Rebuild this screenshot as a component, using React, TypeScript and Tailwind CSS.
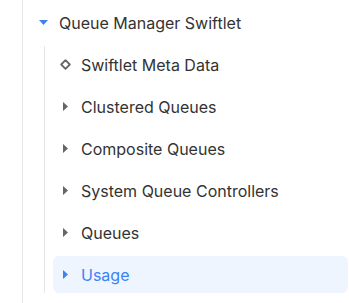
import React from "react";

const CaretDown = () => (
  <svg width="9" height="5" viewBox="0 0 9 5" className="text-[#3b82f6]">
    <polygon points="0,0 9,0 4.5,5" fill="currentColor" />
  </svg>
);

const CaretRight = ({ className = "" }: { className?: string }) => (
  <svg width="5" height="9" viewBox="0 0 5 9" className={className}>
    <polygon points="0,0 5,4.5 0,9" fill="currentColor" />
  </svg>
);

const Diamond = () => (
  <svg width="11" height="11" viewBox="0 0 11 11" className="text-[#666]">
    <polygon
      points="5.5,1.2 9.8,5.5 5.5,9.8 1.2,5.5"
      fill="none"
      stroke="currentColor"
      strokeWidth="1.8"
      strokeLinejoin="round"
    />
  </svg>
);

const items = [
  { label: "Swiftlet Meta Data", leaf: true },
  { label: "Clustered Queues" },
  { label: "Composite Queues" },
  { label: "System Queue Controllers" },
  { label: "Queues" },
  { label: "Usage", selected: true },
];

export default function App() {
  return (
    <div
      className="w-[349px] h-[303px] bg-white pl-[22px] overflow-hidden"
      style={{ fontFamily: "Inter, 'Noto Sans', sans-serif" }}
    >
      <div className="h-full border-l border-[#e6e6e6] pt-[4px] pl-[8px]">
        <div className="h-[37px] flex items-center text-[16px] text-[#333]">
          <span className="w-[24px] flex justify-center">
            <CaretDown />
          </span>
          <span className="ml-[4px]">Queue Manager Swiftlet</span>
        </div>
        <div className="mt-[5px] ml-[13px] border-l border-[#e6e6e6] pl-[8px] pr-[1px] flex flex-col gap-[5px]">
          {items.map((it) => (
            <div
              key={it.label}
              className={`h-[37px] flex items-center rounded-md text-[16px] ${
                it.selected ? "bg-[#eef5ff] text-[#3b82f6]" : "text-[#333]"
              }`}
            >
              <span className="w-[24px] flex justify-center">
                {it.leaf ? (
                  <Diamond />
                ) : (
                  <CaretRight
                    className={it.selected ? "text-[#3b82f6]" : "text-[#666]"}
                  />
                )}
              </span>
              <span className="ml-[4px]">{it.label}</span>
            </div>
          ))}
        </div>
      </div>
    </div>
  );
}
